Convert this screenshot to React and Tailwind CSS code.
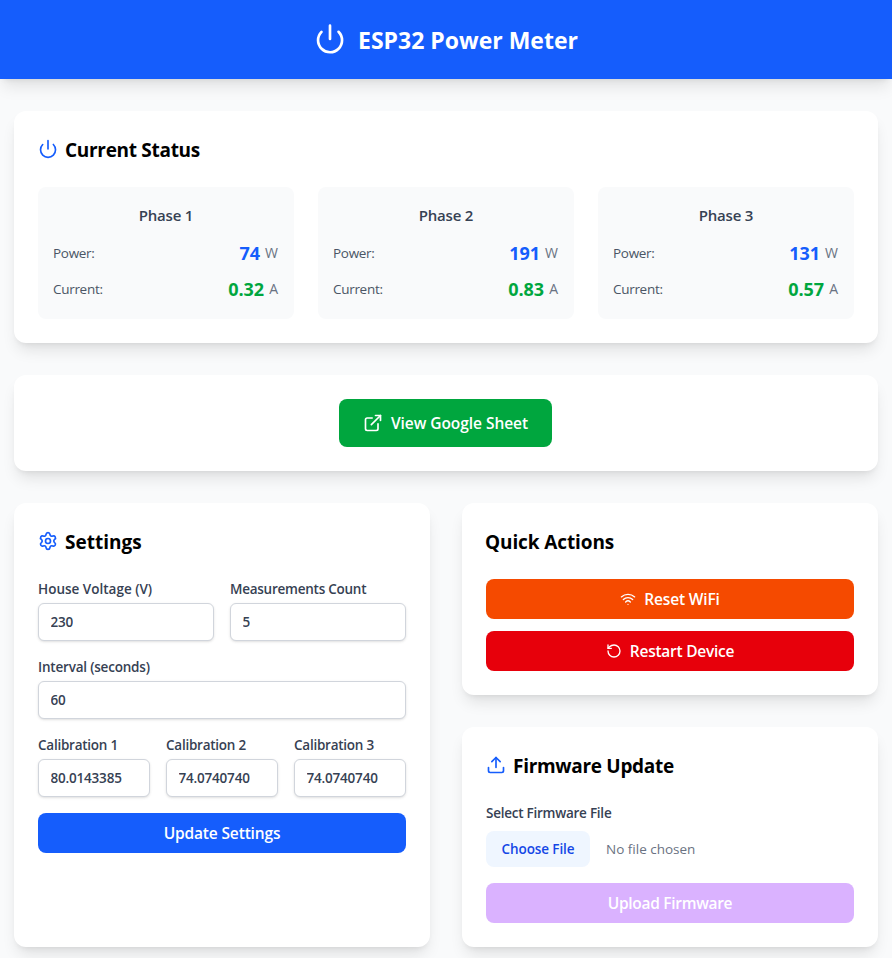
import { Power, ExternalLink, Wifi, RotateCcw, Upload, Settings } from "lucide-react";

const phases = [
  { name: "Phase 1", power: "74", current: "0.32" },
  { name: "Phase 2", power: "191", current: "0.83" },
  { name: "Phase 3", power: "131", current: "0.57" },
];

function Card({ className = "", children }) {
  return <section className={`rounded-xl bg-white p-6 shadow-lg ${className}`}>{children}</section>;
}

function Heading({ icon: Icon, tracking = "tracking-[-0.3px]", children }) {
  return (
    <h2 className={`mb-6 flex h-7 items-center text-[19px] font-bold text-black ${tracking}`}>
      {Icon && <Icon className="mr-2 h-5 w-5 text-blue-600" />}
      <span className="-ml-px pt-0.5">{children}</span>
    </h2>
  );
}

function Reading({ label, value, unit, color }) {
  return (
    <div className="flex h-7 items-center justify-between">
      <span className="-ml-px text-[13.5px] tracking-[-0.3px] text-gray-600">{label}</span>
      <div className="flex items-center gap-[5px]">
        <span className={`text-lg font-bold ${color}`}>{value}</span>
        <span className="text-sm text-gray-500">{unit}</span>
      </div>
    </div>
  );
}

function Field({ label, value, tracking = "tracking-[-0.25px]" }) {
  return (
    <label className="block min-w-0">
      <span className={`block text-[13.5px] leading-5 font-semibold text-gray-700 ${tracking}`}>{label}</span>
      <div className="mt-1 flex h-[38px] items-center rounded-md border border-gray-300 bg-white pr-[27px] pl-[11.5px] text-[13.5px] font-semibold tracking-[-0.2px] text-gray-700 shadow-sm">
        <span className="overflow-hidden">{value}</span>
      </div>
    </label>
  );
}

export default function App() {
  return (
    <div className="h-[958px] overflow-hidden bg-gray-50 font-['Open_Sans','Noto_Sans',sans-serif]">
      <header className="flex h-[79px] items-center justify-center bg-blue-600 text-white shadow-lg">
        <Power className="mb-px mr-3 h-8 w-8" />
        <h1 className="pt-0.5 text-[23px] font-bold">ESP32 Power Meter</h1>
      </header>

      <main className="mx-[14px] flex flex-col gap-8 pt-8">
        <Card>
          <Heading icon={Power}>Current Status</Heading>
          <div className="grid grid-cols-3 gap-6">
            {phases.map((p) => (
              <div key={p.name} className="rounded-lg bg-gray-50 p-4">
                <h3 className="mb-3 text-center text-[15px] leading-6 font-semibold tracking-[-0.2px] text-gray-700">
                  {p.name}
                </h3>
                <div className="space-y-2">
                  <Reading label="Power:" value={p.power} unit="W" color="text-blue-600" />
                  <Reading label="Current:" value={p.current} unit="A" color="text-green-600" />
                </div>
              </div>
            ))}
          </div>
        </Card>

        <Card className="flex justify-center">
          <a className="mr-px flex h-12 w-[213px] items-center justify-center rounded-lg bg-green-600 text-[15.5px] font-semibold tracking-[-0.05px] text-white">
            <ExternalLink className="mr-2 h-5 w-5" />
            <span className="pt-0.5">View Google Sheet</span>
          </a>
        </Card>

        <div className="grid grid-cols-2 gap-8">
          <Card>
            <Heading icon={Settings} tracking="tracking-[0px]">Settings</Heading>
            <div className="space-y-4">
              <div className="grid grid-cols-2 gap-4">
                <Field label="House Voltage (V)" value="230" tracking="tracking-[0px]" />
                <Field label="Measurements Count" value="5" />
              </div>
              <Field label="Interval (seconds)" value="60" tracking="tracking-[-0.2px]" />
              <div className="grid grid-cols-3 gap-4">
                <Field label="Calibration 1" value="80.0143385" />
                <Field label="Calibration 2" value="74.07407407" />
                <Field label="Calibration 3" value="74.07407407" />
              </div>
              <button className="block h-10 w-full rounded-lg bg-blue-600 pt-0.5 text-[15.5px] font-semibold tracking-[-0.15px] text-white">
                Update Settings
              </button>
            </div>
          </Card>

          <div className="flex flex-col gap-8">
            <Card>
              <Heading tracking="tracking-[-0.1px]">Quick Actions</Heading>
              <div className="space-y-3">
                <button className="flex h-10 w-full items-center justify-center rounded-lg bg-orange-600 text-[15.5px] font-semibold tracking-[-0.15px] text-white">
                  <Wifi className="mr-2 h-4 w-4" />
                  <span className="pt-0.5">Reset WiFi</span>
                </button>
                <button className="flex h-10 w-full items-center justify-center rounded-lg bg-red-600 text-[15.5px] font-semibold tracking-[-0.25px] text-white">
                  <RotateCcw className="mr-2 h-4 w-4" />
                  <span className="pt-0.5">Restart Device</span>
                </button>
              </div>
            </Card>

            <Card>
              <Heading icon={Upload}>Firmware Update</Heading>
              <div className="mb-2 text-[13.5px] leading-5 font-semibold tracking-[-0.25px] text-gray-700">
                Select Firmware File
              </div>
              <div className="mb-4 flex items-center">
                <button className="mr-4 h-9 w-[104px] rounded-lg bg-blue-50 text-[13.5px] font-semibold tracking-[-0.1px] text-blue-700">
                  Choose File
                </button>
                <span className="text-[13.5px] text-gray-500">No file chosen</span>
              </div>
              <button className="block h-10 w-full rounded-lg bg-purple-300 pt-0.5 text-[15.5px] font-semibold tracking-[-0.3px] text-white">
                Upload Firmware
              </button>
            </Card>
          </div>
        </div>
      </main>
    </div>
  );
}
